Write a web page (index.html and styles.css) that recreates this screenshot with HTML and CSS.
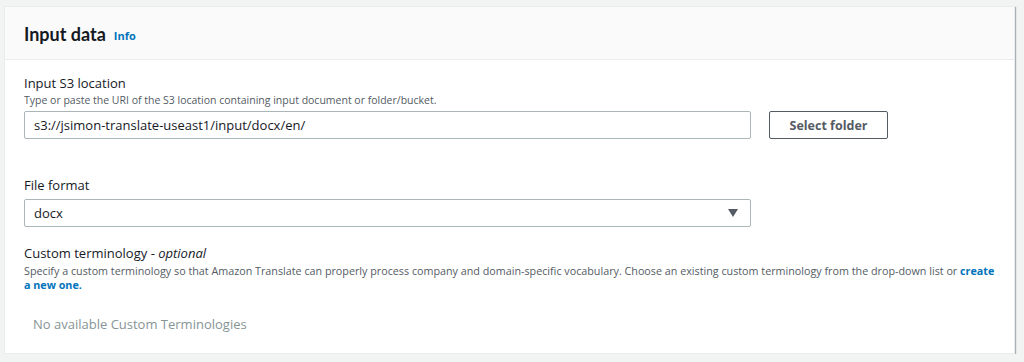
FILE: index.html
```html
<!DOCTYPE html>
<html>
<head>
<meta charset="utf-8">
<link rel="stylesheet" href="styles.css">
</head>
<body>
<div class="card">
  <div class="card-header">
    <h2 class="title">Input data</h2>
    <a class="info">Info</a>
  </div>
  <div class="card-body">
    <div class="field">
      <div class="label">Input S3 location</div>
      <div class="desc">Type or paste the URI of the S3 location containing input document or folder/bucket.</div>
      <div class="row">
        <div class="input">s3://jsimon-translate-useast1/input/docx/en/</div>
        <button class="btn">Select folder</button>
      </div>
    </div>
    <div class="field field-format">
      <div class="label">File format</div>
      <div class="input select">
        <span>docx</span>
        <svg class="caret" width="10" height="8" viewBox="0 0 10 8"><path d="M0 0 H10 L5 8 Z" fill="#545b64"/></svg>
      </div>
    </div>
    <div class="field field-term">
      <div class="label">Custom terminology - <i>optional</i></div>
      <div class="desc desc-term">Specify a custom terminology so that Amazon Translate can properly process company and domain-specific vocabulary. Choose an existing custom terminology from the drop-down list or <a class="link">create a new one.</a></div>
      <div class="empty">No available Custom Terminologies</div>
    </div>
  </div>
</div>
</body>
</html>
```
FILE: styles.css
```css
html, body {
  margin: 0;
  padding: 0;
  background: #f2f3f3;
}
body {
  font-family: "Open Sans", "Noto Sans", sans-serif;
  color: #16191f;
  padding: 6px 8px 0 4px;
}
.card {
  background: #fff;
  width: 1011px;
  height: 348px;
  box-sizing: border-box;
  border: 1px solid #eaeded;
  box-shadow: 1px 1px 1px 0 rgba(0, 28, 36, 0.3);
}
.card-header {
  background: #fafafa;
  border-bottom: 1px solid #eaeded;
  height: 53px;
  box-sizing: border-box;
  display: flex;
  align-items: center;
  padding: 0 0 0 19px;
}
.title {
  margin: 0;
  font-family: Lato, "Open Sans", sans-serif;
  font-size: 18px;
  font-weight: 700;
  color: #16191f;
  margin-top: 1px;
}
.info {
  font-size: 11px;
  font-weight: 700;
  color: #0073bb;
  margin-left: 8px;
  margin-top: 4px;
}
.card-body {
  padding: 14px 19px 0 19px;
}
.label {
  font-size: 13px;
  line-height: 18px;
  color: #16191f;
}
.desc {
  font-size: 10.5px;
  line-height: 14px;
  color: #545b64;
  margin-top: 1px;
}
.row {
  display: flex;
  align-items: center;
  margin-top: 4px;
}
.input {
  width: 727px;
  height: 28px;
  box-sizing: border-box;
  border: 1px solid #aab7b8;
  border-radius: 2px;
  font-size: 13px;
  line-height: 26px;
  padding-left: 9px;
  color: #16191f;
}
.btn {
  margin-left: 18px;
  width: 119px;
  height: 28px;
  box-sizing: border-box;
  background: #fff;
  border: 1px solid #545b64;
  border-radius: 2px;
  font-family: "Open Sans", "Noto Sans", sans-serif;
  font-size: 12.5px;
  font-weight: 700;
  color: #545b64;
  padding: 0;
}
.field-format {
  margin-top: 37px;
}
.field-format .label {
  margin-bottom: 5px;
}
.select {
  display: flex;
  align-items: center;
  justify-content: space-between;
  padding-right: 12px;
}
.caret {
  display: block;
}
.field-term {
  margin-top: 17px;
}
.desc-term {
  font-size: 10.75px;
  margin-top: 2px;
  margin-right: -8px;
}
.link {
  color: #0073bb;
  font-weight: 700;
}
.empty {
  font-size: 13px;
  color: #879596;
  margin-top: 23px;
  padding-left: 9px;
}
```
